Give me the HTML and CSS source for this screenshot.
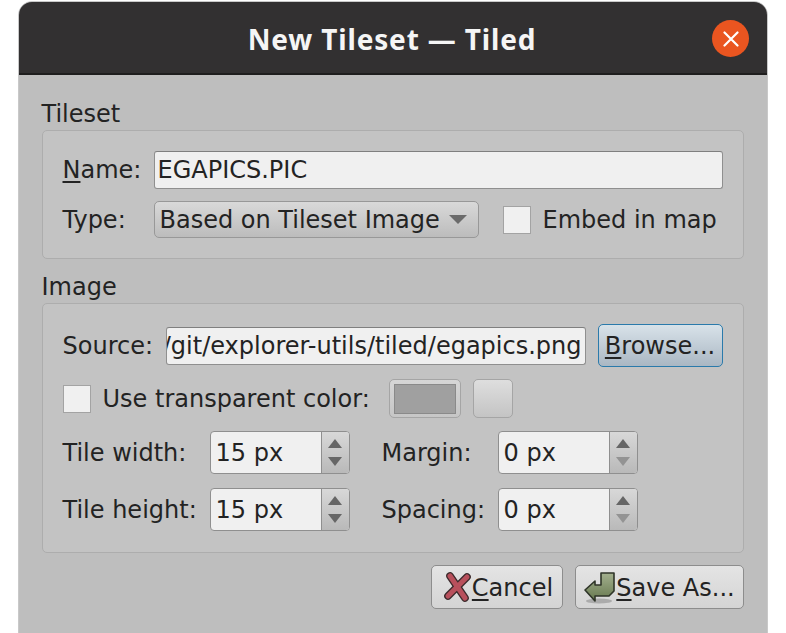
FILE: index.html
```html
<!DOCTYPE html>
<html lang="en">
<head>
<meta charset="utf-8">
<title>New Tileset — Tiled</title>
<link rel="stylesheet" href="styles.css">
</head>
<body>
<div class="window">
  <header class="titlebar">
    <h1 class="title">New Tileset — Tiled</h1>
    <button class="close" aria-label="Close">
      <svg width="16" height="16" viewBox="0 0 16 16"><path d="M1.5 1.5 14.5 14.5M14.5 1.5 1.5 14.5" stroke="#fff" stroke-width="2.2" stroke-linecap="round"/></svg>
    </button>
  </header>
  <main class="content">
    <div class="group-label first">Tileset</div>
    <section class="frame frame-tileset">
      <div class="row row-name">
        <label class="lbl lbl-top"><u>N</u>ame:</label>
        <div class="input input-name">EGAPICS.PIC</div>
      </div>
      <div class="row row-type">
        <label class="lbl lbl-top">Type:</label>
        <div class="combo">Based on Tileset Image<span class="combo-arrow"></span></div>
        <span class="check check-embed"></span>
        <span class="check-text">Embed in map</span>
      </div>
    </section>
    <div class="group-label second">Image</div>
    <section class="frame frame-image">
      <div class="row row-source">
        <label class="lbl lbl-source">Source:</label>
        <div class="input input-source"><span class="source-text">/git/explorer-utils/tiled/egapics.png</span></div>
        <button class="btn btn-browse"><u>B</u>rowse...</button>
      </div>
      <div class="row row-color">
        <span class="check"></span>
        <span class="check-text color-text">Use transparent color:</span>
        <div class="color-btn"><span class="swatch"></span></div>
        <div class="small-btn"></div>
      </div>
      <div class="row row-spin">
        <label class="lbl lbl-spin">Tile width:</label>
        <div class="spin"><span class="spin-value">15 px</span><span class="spin-arrows"><i class="up"></i><i class="down"></i></span></div>
        <label class="lbl lbl-spin2">Margin:</label>
        <div class="spin"><span class="spin-value">0 px</span><span class="spin-arrows"><i class="up"></i><i class="down off"></i></span></div>
      </div>
      <div class="row row-spin row-spin-last">
        <label class="lbl lbl-spin">Tile height:</label>
        <div class="spin"><span class="spin-value">15 px</span><span class="spin-arrows"><i class="up"></i><i class="down"></i></span></div>
        <label class="lbl lbl-spin2">Spacing:</label>
        <div class="spin"><span class="spin-value">0 px</span><span class="spin-arrows"><i class="up"></i><i class="down off"></i></span></div>
      </div>
    </section>
    <footer class="actions">
      <button class="btn btn-cancel">
        <svg class="icon" width="28" height="30" viewBox="0 0 28 30">
          <path d="M6 4 21 26M23 5 4 24" stroke="#3c2a2c" stroke-width="7.6" stroke-linecap="round" fill="none"/>
          <path d="M6 4 21 26M23 5 4 24" stroke="#b8505c" stroke-width="5" stroke-linecap="round" fill="none"/>
        </svg><span class="btn-text"><u>C</u>ancel</span>
      </button>
      <button class="btn btn-save">
        <svg class="icon" width="32" height="34" viewBox="0 0 32 34">
          <defs><linearGradient id="g" x1="0" y1="0" x2="0" y2="1"><stop offset="0" stop-color="#a3b08e"/><stop offset="1" stop-color="#66784e"/></linearGradient></defs>
          <ellipse cx="15" cy="31" rx="13" ry="2.5" fill="#8d8d8d" opacity=".6"/>
          <path d="M1 20 11 11V15H17V3H30V21L25 26H11V31Z" fill="url(#g)" stroke="#2f3529" stroke-width="1.6" stroke-linejoin="round"/>
        </svg><span class="btn-text"><u>S</u>ave As...</span>
      </button>
    </footer>
  </main>
</div>
</body>
</html>
```

FILE: styles.css
```css
* { box-sizing: border-box; }
html, body { margin: 0; height: 100%; overflow: hidden; background: #fff; }
body {
  font-family: "DejaVu Sans", sans-serif;
  font-size: 24px;
  color: #232323;
  line-height: 28px;
}
u { text-underline-offset: 3px; text-decoration-thickness: 2px; }
.window {
  margin: 1px 0 0 18px;
  width: 750px;
  height: 640px;
  border: 1.5px solid #c9c9c9;
  border-radius: 14px 14px 0 0;
  overflow: hidden;
  background: #bebebe;
}
.titlebar {
  height: 73px;
  background: #323031;
  border-bottom: 2px solid #1f1e1e;
  display: flex;
  align-items: center;
  justify-content: center;
  position: relative;
}
.title {
  margin: 3px 2px 0 0;
  font-family: "Noto Sans", sans-serif;
  font-weight: 700;
  font-size: 28px;
  letter-spacing: 0.85px;
  color: #f5f5f5;
}
.close {
  position: absolute;
  right: 18px;
  top: 18px;
  width: 37px;
  height: 37px;
  padding: 0;
  border: 0;
  border-radius: 50%;
  background: #ea5520;
  display: flex;
  align-items: center;
  justify-content: center;
}
.content { padding: 0 23px 0 22.5px; }
.group-label { height: 30px; }
.group-label.first { margin-top: 25px; }
.group-label.second { margin-top: 14px; }
.frame {
  margin-top: 0;
  background: #c3c3c3;
  border: 1px solid #adadad;
  border-radius: 5px;
  padding: 20px 20px 0;
}
.frame-tileset { height: 129px; }
.frame-image { height: 250px; padding-top: 20px; }
.row { display: flex; align-items: center; }
.row-type { margin-top: 12px; }
.row-color { margin-top: 12px; }
.row-spin { margin-top: 13px; }
.row-spin-last { margin-top: 14px; }
.lbl-top { width: 91px; }
.lbl-source { width: 103px; }
.lbl-spin { width: 147px; }
.lbl-spin2 { width: 116px; margin-left: 32px; }
.input {
  height: 38px;
  background: #f0f0f0;
  border: 1px solid #8f8f8f;
  border-top-color: #7f7f7f;
  border-radius: 3px;
  display: flex;
  align-items: center;
}
.input-name { width: 569px; padding-left: 3px; }
.input-source {
  width: 420px;
  overflow: hidden;
  justify-content: flex-end;
  padding-right: 3px;
  white-space: nowrap;
}
.combo {
  width: 325px;
  height: 37px;
  border: 1px solid #989898;
  border-radius: 5px;
  background: linear-gradient(#d9d9d9, #bcbcbc);
  display: flex;
  align-items: center;
  padding-left: 5px;
  white-space: nowrap;
}
.combo-arrow {
  width: 0;
  height: 0;
  margin-left: 9px;
  border-left: 9px solid transparent;
  border-right: 9px solid transparent;
  border-top: 9px solid #6b6b6b;
}
.check {
  width: 28px;
  height: 28px;
  flex: none;
  background: #f0f0f0;
  border: 1px solid #a3a3a3;
}
.check-embed { margin-left: 24px; }
.check-text { margin-left: 12px; white-space: nowrap; }
.btn {
  font: inherit;
  color: inherit;
  border: 1px solid #8d8d8d;
  border-radius: 5px;
  background: linear-gradient(#e6e6e6, #d2d2d2);
  padding: 0;
  display: flex;
  align-items: center;
  justify-content: center;
  white-space: nowrap;
}
.btn-browse {
  width: 125px;
  height: 43px;
  margin-left: 12px;
  border-color: #2a7aab;
  background: linear-gradient(#d8e2e9, #aab7c3);
}
.row-source { height: 43px; }
.color-text { margin-right: 19px; }
.color-btn {
  width: 72px;
  height: 39px;
  border: 1px solid #a5a5a5;
  border-radius: 5px;
  background: linear-gradient(#d6d6d6, #c6c6c6);
  display: flex;
  align-items: center;
  justify-content: center;
}
.swatch { width: 62px; height: 30px; background: #a0a0a0; border: 1px solid #8a8a8a; }
.small-btn {
  width: 40px;
  height: 39px;
  margin-left: 12px;
  border: 1px solid #a5a5a5;
  border-radius: 5px;
  background: linear-gradient(#dedede, #c4c4c4);
}
.spin {
  width: 140px;
  height: 43px;
  border: 1px solid #8f8f8f;
  border-radius: 4px;
  background: #f0f0f0;
  display: flex;
  overflow: hidden;
}
.spin-value { flex: 1; padding-left: 5px; display: flex; align-items: center; }
.spin-arrows {
  width: 28px;
  border-left: 1px solid #8f8f8f;
  background: linear-gradient(#d8d8d8, #b9b9b9);
  display: flex;
  flex-direction: column;
  align-items: center;
  justify-content: center;
  gap: 9px;
}
.spin-arrows i { width: 0; height: 0; border-left: 7.5px solid transparent; border-right: 7.5px solid transparent; }
.spin-arrows .up { border-bottom: 9px solid #666; }
.spin-arrows .down { border-top: 9px solid #666; }
.spin-arrows .down.off { border-top-color: #939393; }
.actions { display: flex; justify-content: flex-end; gap: 12px; margin-top: 12px; }
.btn-cancel, .btn-save { height: 44px; background: linear-gradient(#e4e4e4, #d4d4d4); gap: 0; }
.btn-cancel { width: 132px; padding-left: 3px; }
.btn-save { width: 169px; }
.btn-text { padding-top: 2px; }
.icon { flex: none; }
```
